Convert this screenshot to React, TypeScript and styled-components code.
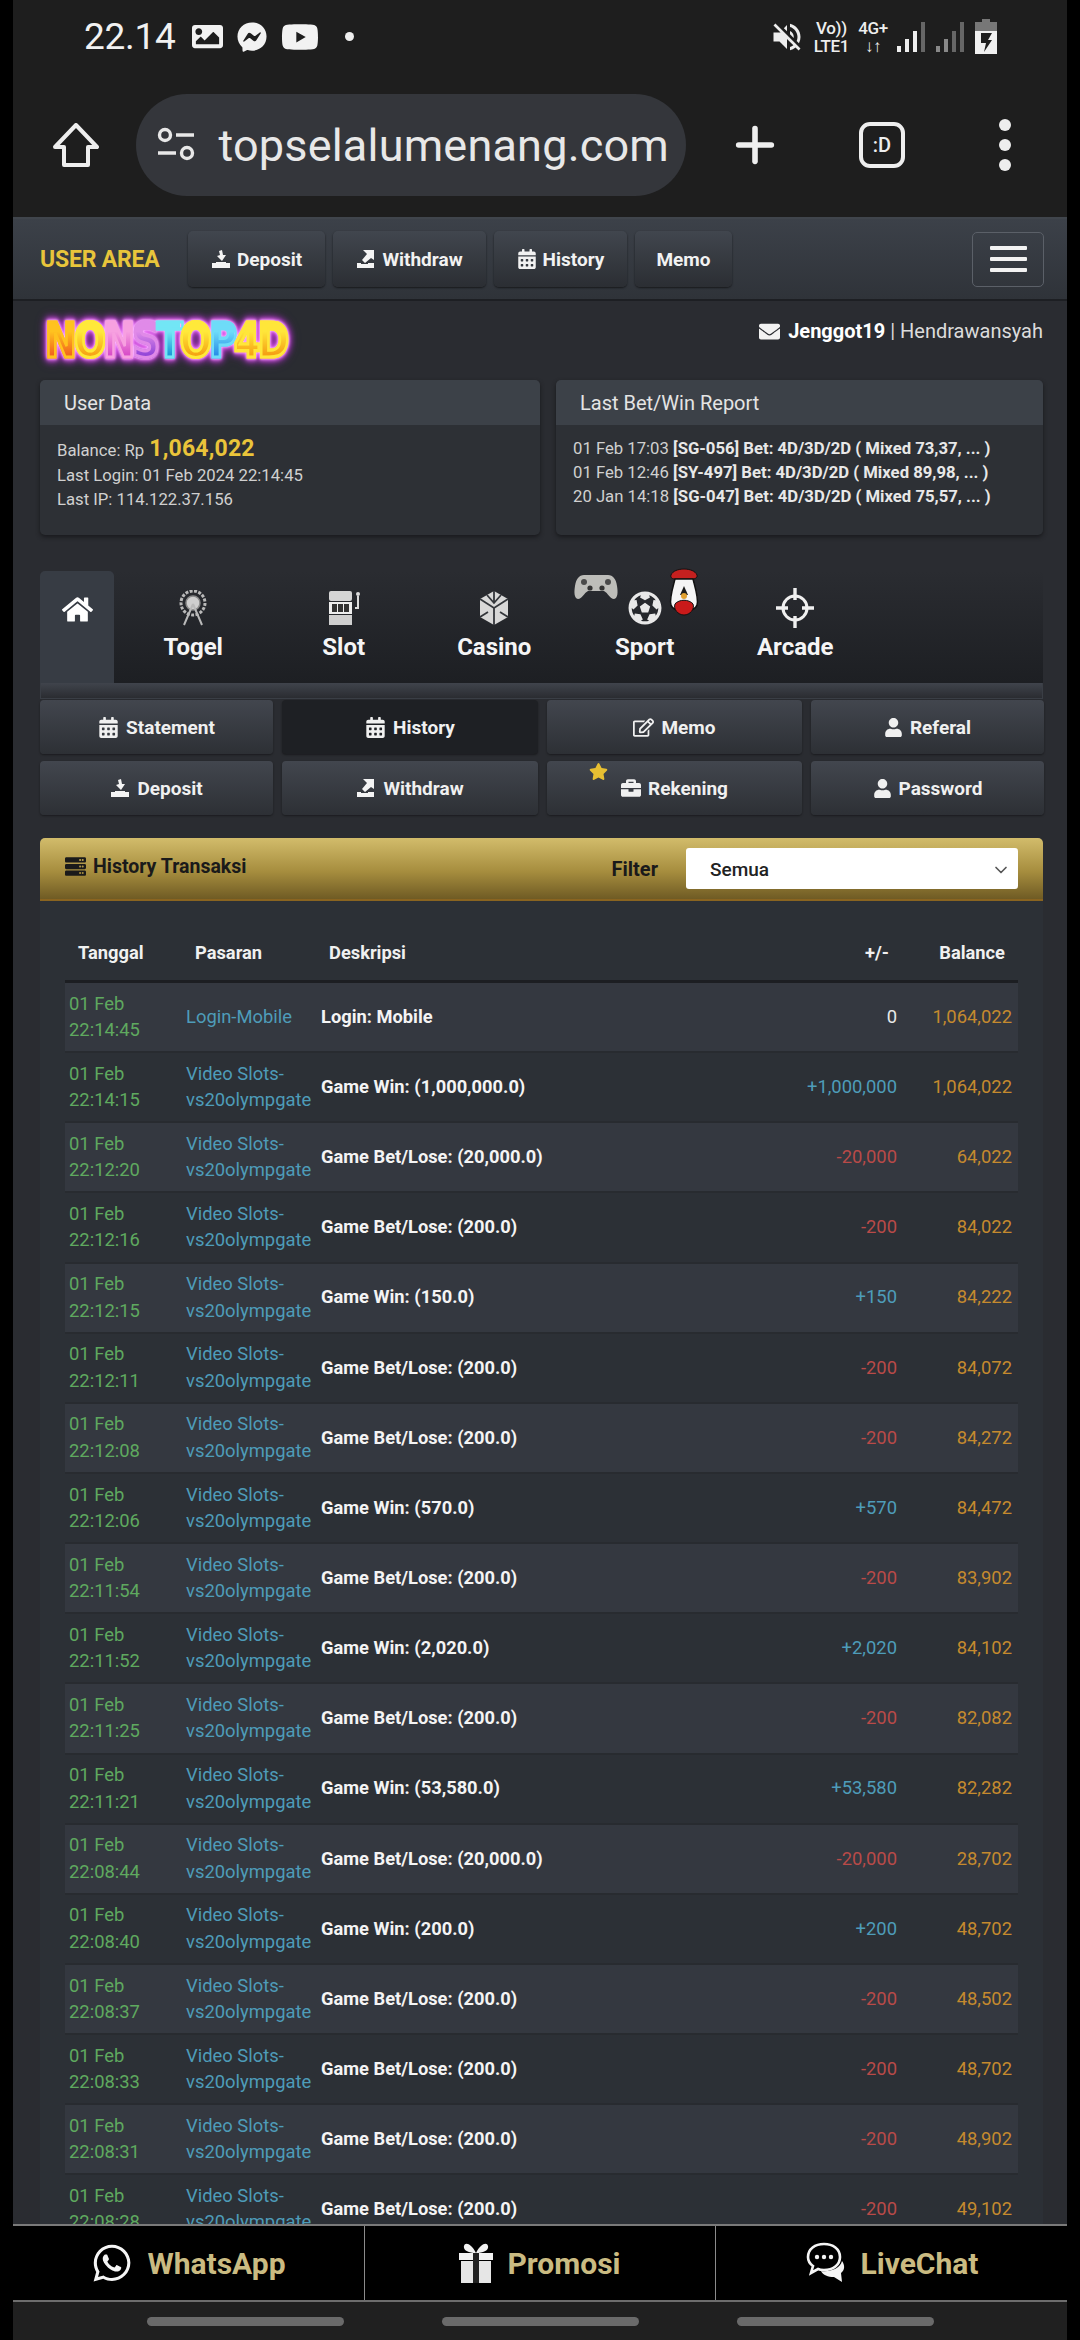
import React from "react";
import styled, { createGlobalStyle } from "styled-components";
import { FaHome, FaUser, FaBriefcase, FaRegEdit, FaEnvelope, FaWhatsapp, FaCalendarAlt, FaImage, FaFacebookMessenger, FaYoutube, FaFutbol, FaStar, FaServer } from "react-icons/fa";
import { MdVolumeOff } from "react-icons/md";
import { ChevronDown, Plus } from "lucide-react";

const Global = createGlobalStyle`
  html, body { margin: 0; padding: 0; background: #000; }
  * { box-sizing: border-box; }
  body { font-family: Roboto, "Liberation Sans", sans-serif; color: #fff; }
`;

const Frame = styled.div`
  width: 1080px; height: 2340px; padding: 0 13px; background: #000;
  display: flex; flex-direction: column; overflow: hidden;
`;
const StatusBar = styled.div`
  height: 73px; flex: none; background: #1e1e1e; display: flex; align-items: center;
  padding: 0 70px 0 71px; justify-content: space-between;
`;
const StatusLeft = styled.div`display: flex; align-items: center; gap: 14px;`;
const Time = styled.span`font-size: 37px; font-weight: 400; color: #f1f1f1; margin-right: 3px; letter-spacing: -0.3px;`;
const StatusDot = styled.span`width: 9px; height: 9px; border-radius: 50%; background: #eee; margin-left: 12px;`;
const StatusRight = styled.div`display: flex; align-items: center; gap: 9px;`;
const Tiny = styled.div`
  font-size: 17px; line-height: 18px; font-weight: 500; color: #eee; text-align: center; letter-spacing: -0.3px;
`;
const Browser = styled.div`
  height: 144px; flex: none; background: #1e1e1e; display: flex; align-items: center; padding: 0 0 0 40px;
  color: #eee;
`;
const UrlPill = styled.div`
  width: 550px; height: 102px; margin-left: 37px; border-radius: 51px; background: #34363b;
  display: flex; align-items: center; padding: 0 17px 0 21px; gap: 22px; flex: none;
`;
const UrlClip = styled.div`
  flex: 1; overflow: hidden; display: flex; justify-content: flex-end; white-space: nowrap;
  font-size: 45px; color: #e8e8e8; letter-spacing: 0.2px;
`;
const BrowserIcons = styled.div`
  flex: 1; display: flex; align-items: center; padding: 0 54px 0 41px; justify-content: space-between;
`;
const TabCount = styled.div`
  width: 46px; height: 46px; border: 4px solid #eee; border-radius: 11px; font-size: 20px; font-weight: 500;
  display: flex; align-items: center; justify-content: center; margin-right: 16px;
`;
const TopNav = styled.div`
  height: 84px; flex: none; display: flex; align-items: center; padding: 0 23px 0 27px;
  background: linear-gradient(#3c4149, #2f3339); border-top: 2px solid #40454c; border-bottom: 2px solid #1d1f23;
`;
const Brand = styled.span`
  color: #e8c53b; font-size: 23px; font-weight: 700; width: 148px; flex: none; letter-spacing: -0.2px;
`;
const TopBtn = styled.div<{ $w: number }>`
  width: ${(p) => p.$w}px; height: 56px; margin-right: 8px; flex: none; border-radius: 5px;
  background: linear-gradient(#41464e, #2b2e33); box-shadow: 0 1px 2px #16181b;
  display: flex; align-items: center; justify-content: center; gap: 6px;
  color: #f2f2f2; font-size: 19px; font-weight: 700;
`;
const Burger = styled.div`
  width: 72px; height: 55px; margin-left: auto; border: 1px solid #5b6068; border-radius: 5px;
  display: flex; flex-direction: column; justify-content: center; align-items: center; gap: 7px;
  i { width: 37px; height: 4px; background: #f2f2f2; border-radius: 1px; display: block; }
`;
const Content = styled.div`
  flex: 1; min-height: 0; overflow: hidden; padding: 0 24px 0 27px; background: #2a2c31;
`;
const HeadRow = styled.div`
  height: 79px; display: flex; justify-content: space-between; align-items: flex-start;
`;
const Logo = styled.div`
  margin-top: 12px; display: flex; height: 54px; align-items: center; padding: 0 5px;
  font-family: "DejaVu Sans", sans-serif; font-weight: 700; font-size: 38px; letter-spacing: -2.9px;
  transform: scaleY(1.28);
  filter: drop-shadow(0 0 1px #ffc6ff) drop-shadow(0 0 1.5px #f58cff) drop-shadow(0 0 3px #d040e0) drop-shadow(0 0 3px #6c2488);
`;
const LogoLetter = styled.span<{ $a: string; $b: string }>`
  background: linear-gradient(${(p) => p.$a} 35%, ${(p) => p.$b} 75%);
  -webkit-background-clip: text; background-clip: text; color: transparent;
  -webkit-text-stroke: 2.5px ${(p) => p.$a};
`;
const UserLine = styled.div`
  margin-top: 18px; font-size: 20px; color: #dcdcdc; display: flex; align-items: center; gap: 8px;
  b { color: #fff; font-weight: 700; }
`;
const Panels = styled.div`display: grid; grid-template-columns: 500px 487px; gap: 16px;`;
const Panel = styled.div`
  height: 155px; border-radius: 5px; background: #2d3035; box-shadow: 0 2px 4px #18191c; overflow: hidden;
`;
const PanelHead = styled.div`
  height: 45px; background: #3c4148; display: flex; align-items: center; padding-left: 24px;
  font-size: 20px; color: #e4e4e4;
`;
const PanelBody = styled.div`padding: 12px 17px; font-size: 16.7px; line-height: 24px; color: #d0d0d0;
  b { color: #e8e8e8; font-weight: 700; }`;
const BalLine = styled.div`display: flex; align-items: baseline; gap: 5px; height: 27px;
  strong { font-size: 23px; color: #eac43a; font-weight: 700; letter-spacing: 0.2px; }`;
const TabsArea = styled.div`
  margin-top: 36px; height: 112px; display: flex;
  background: linear-gradient(#2a2c31, #1d1f23);
`;
const HomeTab = styled.div`
  width: 74px; flex: none; background: #373c44; border-radius: 5px 5px 0 0; display: flex; justify-content: center; padding-top: 23px;
`;
const MenuTabs = styled.div`display: flex; margin-left: 4px;`;
const MenuTab = styled.div`
  width: 150.5px; position: relative; display: flex; flex-direction: column; align-items: center; height: 112px; padding-top: 18px;
`;
const TabIcon = styled.div`height: 38px; display: flex; align-items: center; justify-content: center;`;
const TabLabel = styled.div`font-size: 24px; font-weight: 700; color: #f5f5f5; margin-top: 2px; line-height: 36px;`;
const PadIcon = styled.div`position: absolute; left: 3px; top: 3px;`;
const CockIcon = styled.div`position: absolute; left: 98px; top: -4px;`;
const Bar = styled.div`
  height: 16px; background: linear-gradient(#40444c, #2a2c31); border: 1px solid #3a3e45; border-top: none;
`;
const SubGrid = styled.div`
  margin-top: 1px; display: grid; grid-template-columns: 233px 256px 255px 233px; grid-auto-rows: 54px; gap: 7px 9px;
`;
const SubBtn = styled.div<{ $active?: boolean }>`
  position: relative; border-radius: 4px; display: flex; align-items: center; justify-content: center; gap: 7px;
  font-size: 19px; font-weight: 700; color: #f0f0f0;
  background: ${(p) => (p.$active ? "#1e2024" : "linear-gradient(#42464e, #2d3035)")};
  box-shadow: 0 1px 2px #1a1b1e;
`;
const Star = styled.span`position: absolute; left: 42px; top: 1px; color: #e7bf32; display: flex;`;
const Card = styled.div`margin-top: 23px; background: #2c3036; border-radius: 5px 5px 0 0;`;
const CardHead = styled.div`
  height: 63px; display: flex; align-items: center; padding: 0 25px; color: #1a1a1a; font-weight: 700;
  background: linear-gradient(#d2bc6b, #a68d3e 55%, #6f5b24); border-bottom: 2px solid #8a6420; border-radius: 5px 5px 0 0;
`;
const CardTitle = styled.div`display: flex; align-items: center; gap: 7px; font-size: 19.5px; font-weight: 700; margin-top: -5px;`;
const FilterLabel = styled.span`margin-left: auto; font-size: 20px; font-weight: 700; margin-right: 28px;`;
const SelectBox = styled.div`
  width: 332px; height: 41px; background: #fff; border-radius: 3px; display: flex; align-items: center;
  justify-content: space-between; padding: 2px 7px 0 24px; font-size: 19px; font-weight: 500; color: #222;
`;
const TableWrap = styled.div`padding: 21px 25px 0;`;
const cols = "121px 135px 1fr 140px 115px";
const HeaderRow = styled.div`
  display: grid; grid-template-columns: ${cols}; height: 61px; align-items: center; border-bottom: 3px solid #1c1e22;
  font-size: 18.3px; font-weight: 700; color: #f0f0f0; padding-top: 2px;
`;
const HCell = styled.div<{ $right?: boolean; $pad: number }>`
  ${(p) => (p.$right ? `text-align: right; padding-right: ${p.$pad}px;` : `padding-left: ${p.$pad}px;`)}
`;
const Row = styled.div<{ $odd: boolean }>`
  display: grid; grid-template-columns: ${cols}; height: 70.15px; align-items: center; font-size: 18.4px; line-height: 26.5px;
  background: ${(p) => (p.$odd ? "#343840" : "#2c3036")};
  border-bottom: 2px solid #282b30;
`;
const DateCell = styled.div`padding-left: 4px; color: #5fa95f;`;
const MarketCell = styled.div`color: #4e9cb9; white-space: nowrap;`;
const DescCell = styled.div`color: #f4f4f4; font-weight: 700; font-size: 18.3px;`;
const AmountCell = styled.div<{ $c: string }>`text-align: right; padding-right: 6px; color: ${(p) => p.$c};`;
const BalCell = styled.div`text-align: right; padding-right: 6px; color: #c58a2e;`;
const Footer = styled.div`
  height: 78px; flex: none; display: grid; grid-template-columns: 352px 351px 351px; background: #000;
  border-top: 2px solid #7a7a7a; border-bottom: 2px solid #6d6d6d;
`;
const FootBtn = styled.div<{ $last?: boolean }>`
  display: flex; align-items: center; justify-content: center; gap: 14px; color: #cabb82; font-size: 30px; font-weight: 700;
  border-right: ${(p) => (p.$last ? "none" : "1px solid #8b8b8b")};
  svg { color: #f5f5f5; }
`;
const NavBar = styled.div`
  height: 38px; flex: none; background: #202020; display: flex; justify-content: center; gap: 98px; padding-top: 15px;
  i { display: block; width: 197px; height: 9px; border-radius: 5px; background: #6a6a6a; }
`;

const Import = ({ s = 20 }: { s?: number }) => (
  <svg width={s} height={s} viewBox="0 0 20 20" fill="#f4f4f4"><path d="M1 14h4v-1h10v1h4v5H1z" /><path d="M8 2l3-1 1 5h3l-4 6-5-5 3-1z" /></svg>
);
const Export = ({ s = 20 }: { s?: number }) => (
  <svg width={s} height={s} viewBox="0 0 20 20" fill="#f4f4f4"><path d="M1 14h4v1h7v-1h6v5H1z" /><path d="M7 1h11v10l-3-2-6 5-3-3 5-6z" /></svg>
);
const HouseOutline = () => (
  <svg width="46" height="44" viewBox="0 0 46 44" fill="none" stroke="#eee" strokeWidth="4" strokeLinejoin="round"><path d="M23 2L44 24H35V42H11V24H2z" /></svg>
);
const Dots = () => (
  <svg width="16" height="54" viewBox="0 0 16 54" fill="#eee"><circle cx="8" cy="7" r="6" /><circle cx="8" cy="27" r="6" /><circle cx="8" cy="47" r="6" /></svg>
);
const Tune = () => (
  <svg width="38" height="38" viewBox="0 0 38 38" fill="none" stroke="#e8e8e8" strokeWidth="3.4"><circle cx="8" cy="9" r="5.5" /><path d="M19 9h18M1 27h18" /><circle cx="30" cy="27" r="5.5" /></svg>
);
const Signal = ({ dim }: { dim?: boolean }) => (
  <svg width="30" height="32" viewBox="0 0 30 32">
    <rect x="0" y="25" width="4" height="6" fill={dim ? "#888" : "#eee"} /><rect x="8" y="18" width="4" height="13" fill={dim ? "#888" : "#eee"} />
    <rect x="16" y="10" width="4" height="21" fill={dim ? "#666" : "#eee"} /><rect x="24" y="1" width="4" height="30" fill="#666" />
  </svg>
);
const Battery = () => (
  <svg width="22" height="36" viewBox="0 0 22 36"><rect x="7" y="0" width="8" height="4" fill="#777" /><rect x="0" y="3" width="22" height="9" fill="#777" /><rect x="0" y="12" width="22" height="23" fill="#f0f0f0" /><path d="M6 14h11l-4 7h4L9 33l2-9H6z" fill="#1e1e1e" /></svg>
);
const Ferris = () => (
  <svg width="30" height="36" viewBox="0 0 30 36" fill="none" stroke="#b9b9b9">
    <circle cx="15" cy="13" r="12" strokeWidth="3" strokeDasharray="3 1.4" /><circle cx="15" cy="13" r="7" fill="#cfcfcf" stroke="#8a8a8a" strokeWidth="1.5" />
    <path d="M15 14L6 35M15 14l9 21" strokeWidth="2" />
  </svg>
);
const SlotM = () => (
  <svg width="32" height="36" viewBox="0 0 32 36">
    <rect x="1" y="1" width="23" height="10" rx="2" fill="#d5d5d5" /><rect x="1" y="12" width="23" height="12" fill="#eee" /><rect x="4" y="14" width="5" height="8" fill="#333" /><rect x="10" y="14" width="5" height="8" fill="#333" /><rect x="16" y="14" width="5" height="8" fill="#333" />
    <rect x="1" y="25" width="23" height="10" fill="#cfcfcf" /><path d="M27 18h3V6" stroke="#ddd" strokeWidth="2" fill="none" /><circle cx="30" cy="4" r="2" fill="#ddd" />
  </svg>
);
const Die = () => (
  <svg width="32" height="36" viewBox="0 0 32 36">
    <path d="M16 1l14 8v18l-14 8-14-8V9z" fill="#d8d8d8" /><path d="M16 1v12M2 9l14 9 14-9M16 18v17M2 27l8-5M30 27l-8-5M9 5l7 8 7-8" stroke="#33363b" strokeWidth="1.8" fill="none" />
  </svg>
);
const Pad = () => (
  <svg width="46" height="26" viewBox="0 0 46 26">
    <path d="M11 1h24c5 0 8 4 9 11 1 6 1 12-3 13-4 0-6-6-10-8H15c-4 2-6 8-10 8-4-1-4-7-3-13C3 5 6 1 11 1z" fill="#bdbdb9" />
    <circle cx="11" cy="8" r="3" fill="#4a4a4a" /><circle cx="35" cy="8" r="3" fill="#4a4a4a" /><circle cx="17" cy="14" r="2.6" fill="#333" /><circle cx="29" cy="14" r="2.6" fill="#333" />
  </svg>
);
const Cock = () => (
  <svg width="32" height="50" viewBox="0 0 32 50">
    <path d="M3 8c3-8 23-8 26 0 1 3-3 4-4 4H7c-2 0-5-1-4-4z" fill="#c5201f" stroke="#111" />
    <path d="M7 12h18c2 8 6 20 4 26-2 8-24 8-26 0-2-6 2-18 4-26z" fill="#f5f5f5" stroke="#111" strokeWidth="1.5" />
    <path d="M16 19l4 9h-8z" fill="#1a1a1a" /><circle cx="16" cy="29" r="3" fill="#e0a030" />
    <path d="M7 37c4-5 14-5 18 0 2 5-3 11-9 11s-11-6-9-11z" fill="#c91a1a" stroke="#111" />
  </svg>
);
const Target = () => (
  <svg width="38" height="40" viewBox="0 0 38 40" fill="none" stroke="#f0f0f0"><circle cx="19" cy="20" r="12" strokeWidth="3" /><path d="M19 0v12M19 28v12M0 20h12M26 20h12" strokeWidth="3.4" /></svg>
);
const Gift = () => (
  <svg width="34" height="40" viewBox="0 0 34 40">
    <path d="M17 10C12 0 6-1 5 3c-1 4 4 7 12 7zM17 10c5-10 11-11 12-7 1 4-4 7-12 7z" fill="#f2f2f2" />
    <rect x="0" y="10" width="34" height="7" fill="#f2f2f2" /><rect x="2" y="18" width="30" height="22" fill="#e6e6e6" /><rect x="14" y="10" width="6" height="30" fill="#222" />
  </svg>
);
const Chat = () => (
  <svg width="42" height="42" viewBox="0 0 42 42" fill="none">
    <path d="M20 2c9 0 16 5 16 13s-7 13-16 13c-2 0-4 0-6-1l-7 4 2-7c-3-2-5-5-5-9C4 7 11 2 20 2z" stroke="#f5f5f5" strokeWidth="2.6" />
    <circle cx="13" cy="15" r="2.2" fill="#f5f5f5" /><circle cx="20" cy="15" r="2.2" fill="#f5f5f5" /><circle cx="27" cy="15" r="2.2" fill="#f5f5f5" />
    <path d="M38 19c3 4 3 9-1 12l1 9-8-5c-6 0-11-2-13-6 9 1 19-2 21-10z" fill="#f5f5f5" />
  </svg>
);

type R = [string, string, string, string, string];
const WIN = "Game Win: ";
const BET = "Game Bet/Lose: ";
const rows: R[] = [
  ["22:14:45", "login", "Login: Mobile", "0", "1,064,022"],
  ["22:14:15", "", WIN + "(1,000,000.0)", "+1,000,000", "1,064,022"],
  ["22:12:20", "", BET + "(20,000.0)", "-20,000", "64,022"],
  ["22:12:16", "", BET + "(200.0)", "-200", "84,022"],
  ["22:12:15", "", WIN + "(150.0)", "+150", "84,222"],
  ["22:12:11", "", BET + "(200.0)", "-200", "84,072"],
  ["22:12:08", "", BET + "(200.0)", "-200", "84,272"],
  ["22:12:06", "", WIN + "(570.0)", "+570", "84,472"],
  ["22:11:54", "", BET + "(200.0)", "-200", "83,902"],
  ["22:11:52", "", WIN + "(2,020.0)", "+2,020", "84,102"],
  ["22:11:25", "", BET + "(200.0)", "-200", "82,082"],
  ["22:11:21", "", WIN + "(53,580.0)", "+53,580", "82,282"],
  ["22:08:44", "", BET + "(20,000.0)", "-20,000", "28,702"],
  ["22:08:40", "", WIN + "(200.0)", "+200", "48,702"],
  ["22:08:37", "", BET + "(200.0)", "-200", "48,502"],
  ["22:08:33", "", BET + "(200.0)", "-200", "48,702"],
  ["22:08:31", "", BET + "(200.0)", "-200", "48,902"],
  ["22:08:28", "", BET + "(200.0)", "-200", "49,102"],
];
const amountColor = (a: string) => (a === "0" ? "#e8e8e8" : a[0] === "+" ? "#4e9cb9" : "#b94a48");

const logoLetters: [string, string, string][] = [
  ["N", "#ffc21f", "#f2661e"], ["O", "#ffe93a", "#f7a516"], ["N", "#f7a0e0", "#d94fc8"], ["S", "#e08ae8", "#9548d8"],
  ["T", "#72e6f5", "#1e98d8"], ["O", "#ffe93a", "#f5a514"], ["P", "#6edcf8", "#2b8fe8"], ["4", "#ffe63a", "#f7a516"], ["D", "#ffe63a", "#f5a014"],
];

export default function App() {
  return (
    <Frame>
      <Global />
      <StatusBar>
        <StatusLeft>
          <Time>22.14</Time>
          <FaImage size={31} color="#f2f2f2" />
          <FaFacebookMessenger size={30} color="#f2f2f2" />
          <FaYoutube size={38} color="#f2f2f2" />
          <StatusDot />
        </StatusLeft>
        <StatusRight>
          <MdVolumeOff size={36} color="#eee" />
          <Tiny>Vo))<br />LTE1</Tiny>
          <Tiny>4G+<br />↓↑</Tiny>
          <Signal />
          <Signal dim />
          <Battery />
        </StatusRight>
      </StatusBar>
      <Browser>
        <HouseOutline />
        <UrlPill>
          <Tune />
          <UrlClip>stopselalumenang.com</UrlClip>
        </UrlPill>
        <BrowserIcons>
          <Plus size={56} strokeWidth={2.4} />
          <TabCount>:D</TabCount>
          <Dots />
        </BrowserIcons>
      </Browser>
      <TopNav>
        <Brand>USER AREA</Brand>
        <TopBtn $w={137}><Import />Deposit</TopBtn>
        <TopBtn $w={153}><Export />Withdraw</TopBtn>
        <TopBtn $w={133}><FaCalendarAlt size={20} />History</TopBtn>
        <TopBtn $w={97}>Memo</TopBtn>
        <Burger><i /><i /><i /></Burger>
      </TopNav>
      <Content>
        <HeadRow>
          <Logo>
            {logoLetters.map(([l, a, b], i) => (
              <LogoLetter key={i} $a={a} $b={b}>{l}</LogoLetter>
            ))}
          </Logo>
          <UserLine>
            <FaEnvelope size={21} color="#f2f2f2" />
            <span><b>Jenggot19</b> | Hendrawansyah</span>
          </UserLine>
        </HeadRow>
        <Panels>
          <Panel>
            <PanelHead>User Data</PanelHead>
            <PanelBody>
              <BalLine>Balance: Rp <strong>1,064,022</strong></BalLine>
              <div>Last Login: 01 Feb 2024 22:14:45</div>
              <div>Last IP: 114.122.37.156</div>
            </PanelBody>
          </Panel>
          <Panel>
            <PanelHead>Last Bet/Win Report</PanelHead>
            <PanelBody>
              <div>01 Feb 17:03 <b>[SG-056] Bet: 4D/3D/2D ( Mixed 73,37, ... )</b></div>
              <div>01 Feb 12:46 <b>[SY-497] Bet: 4D/3D/2D ( Mixed 89,98, ... )</b></div>
              <div>20 Jan 14:18 <b>[SG-047] Bet: 4D/3D/2D ( Mixed 75,57, ... )</b></div>
            </PanelBody>
          </Panel>
        </Panels>
        <TabsArea>
          <HomeTab><FaHome size={31} color="#fff" /></HomeTab>
          <MenuTabs>
            <MenuTab><TabIcon><Ferris /></TabIcon><TabLabel>Togel</TabLabel></MenuTab>
            <MenuTab><TabIcon><SlotM /></TabIcon><TabLabel>Slot</TabLabel></MenuTab>
            <MenuTab><TabIcon><Die /></TabIcon><TabLabel>Casino</TabLabel></MenuTab>
            <MenuTab>
              <PadIcon><Pad /></PadIcon>
              <CockIcon><Cock /></CockIcon>
              <TabIcon><FaFutbol size={34} color="#e8e8e8" /></TabIcon>
              <TabLabel>Sport</TabLabel>
            </MenuTab>
            <MenuTab><TabIcon><Target /></TabIcon><TabLabel>Arcade</TabLabel></MenuTab>
          </MenuTabs>
        </TabsArea>
        <Bar />
        <SubGrid>
          <SubBtn><FaCalendarAlt size={21} />Statement</SubBtn>
          <SubBtn $active><FaCalendarAlt size={21} />History</SubBtn>
          <SubBtn><FaRegEdit size={21} />Memo</SubBtn>
          <SubBtn><FaUser size={19} />Referal</SubBtn>
          <SubBtn><Import />Deposit</SubBtn>
          <SubBtn><Export />Withdraw</SubBtn>
          <SubBtn><Star><FaStar size={19} /></Star><FaBriefcase size={20} />Rekening</SubBtn>
          <SubBtn><FaUser size={19} />Password</SubBtn>
        </SubGrid>
        <Card>
          <CardHead>
            <CardTitle><FaServer size={21} />History Transaksi</CardTitle>
            <FilterLabel>Filter</FilterLabel>
            <SelectBox>Semua<ChevronDown size={20} color="#555" /></SelectBox>
          </CardHead>
          <TableWrap>
            <HeaderRow>
              <HCell $pad={13}>Tanggal</HCell>
              <HCell $pad={9}>Pasaran</HCell>
              <HCell $pad={8}>Deskripsi</HCell>
              <HCell $right $pad={14}>+/-</HCell>
              <HCell $right $pad={13}>Balance</HCell>
            </HeaderRow>
            {rows.map((r, i) => (
              <Row key={r[0]} $odd={i % 2 === 0}>
                <DateCell>01 Feb<br />{r[0]}</DateCell>
                <MarketCell>{r[1] === "login" ? "Login-Mobile" : <>Video Slots-<br />vs20olympgate</>}</MarketCell>
                <DescCell>{r[2]}</DescCell>
                <AmountCell $c={amountColor(r[3])}>{r[3]}</AmountCell>
                <BalCell>{r[4]}</BalCell>
              </Row>
            ))}
          </TableWrap>
        </Card>
      </Content>
      <Footer>
        <FootBtn><FaWhatsapp size={42} />WhatsApp</FootBtn>
        <FootBtn><Gift />Promosi</FootBtn>
        <FootBtn $last><Chat />LiveChat</FootBtn>
      </Footer>
      <NavBar><i /><i /><i /></NavBar>
    </Frame>
  );
}
